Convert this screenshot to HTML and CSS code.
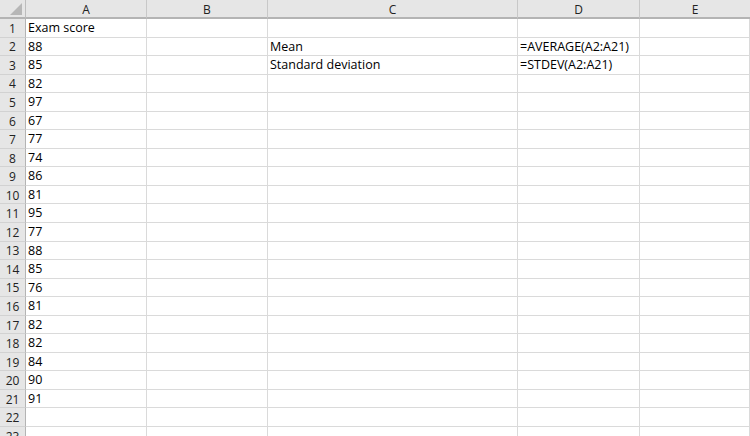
FILE: index.html
```html
<!DOCTYPE html>
<html lang="en">
<head>
  <meta charset="UTF-8" />
  <title>Exam scores</title>
  <link rel="stylesheet" href="styles.css">
</head>
<body>
  <div class="sheet">
    <div class="corner"><span class="tri"></span></div>
    <div class="col-head">A</div>
    <div class="col-head">B</div>
    <div class="col-head">C</div>
    <div class="col-head">D</div>
    <div class="col-head last">E</div>

    <div class="row-head">1</div><div class="cell">Exam score</div><div class="cell"></div><div class="cell"></div><div class="cell"></div><div class="cell"></div>
    <div class="row-head">2</div><div class="cell">88</div><div class="cell"></div><div class="cell">Mean</div><div class="cell">=AVERAGE(A2:A21)</div><div class="cell"></div>
    <div class="row-head">3</div><div class="cell">85</div><div class="cell"></div><div class="cell">Standard deviation</div><div class="cell">=STDEV(A2:A21)</div><div class="cell"></div>
    <div class="row-head">4</div><div class="cell">82</div><div class="cell"></div><div class="cell"></div><div class="cell"></div><div class="cell"></div>
    <div class="row-head">5</div><div class="cell">97</div><div class="cell"></div><div class="cell"></div><div class="cell"></div><div class="cell"></div>
    <div class="row-head">6</div><div class="cell">67</div><div class="cell"></div><div class="cell"></div><div class="cell"></div><div class="cell"></div>
    <div class="row-head">7</div><div class="cell">77</div><div class="cell"></div><div class="cell"></div><div class="cell"></div><div class="cell"></div>
    <div class="row-head">8</div><div class="cell">74</div><div class="cell"></div><div class="cell"></div><div class="cell"></div><div class="cell"></div>
    <div class="row-head">9</div><div class="cell">86</div><div class="cell"></div><div class="cell"></div><div class="cell"></div><div class="cell"></div>
    <div class="row-head">10</div><div class="cell">81</div><div class="cell"></div><div class="cell"></div><div class="cell"></div><div class="cell"></div>
    <div class="row-head">11</div><div class="cell">95</div><div class="cell"></div><div class="cell"></div><div class="cell"></div><div class="cell"></div>
    <div class="row-head">12</div><div class="cell">77</div><div class="cell"></div><div class="cell"></div><div class="cell"></div><div class="cell"></div>
    <div class="row-head">13</div><div class="cell">88</div><div class="cell"></div><div class="cell"></div><div class="cell"></div><div class="cell"></div>
    <div class="row-head">14</div><div class="cell">85</div><div class="cell"></div><div class="cell"></div><div class="cell"></div><div class="cell"></div>
    <div class="row-head">15</div><div class="cell">76</div><div class="cell"></div><div class="cell"></div><div class="cell"></div><div class="cell"></div>
    <div class="row-head">16</div><div class="cell">81</div><div class="cell"></div><div class="cell"></div><div class="cell"></div><div class="cell"></div>
    <div class="row-head">17</div><div class="cell">82</div><div class="cell"></div><div class="cell"></div><div class="cell"></div><div class="cell"></div>
    <div class="row-head">18</div><div class="cell">82</div><div class="cell"></div><div class="cell"></div><div class="cell"></div><div class="cell"></div>
    <div class="row-head">19</div><div class="cell">84</div><div class="cell"></div><div class="cell"></div><div class="cell"></div><div class="cell"></div>
    <div class="row-head">20</div><div class="cell">90</div><div class="cell"></div><div class="cell"></div><div class="cell"></div><div class="cell"></div>
    <div class="row-head">21</div><div class="cell">91</div><div class="cell"></div><div class="cell"></div><div class="cell"></div><div class="cell"></div>
    <div class="row-head">22</div><div class="cell"></div><div class="cell"></div><div class="cell"></div><div class="cell"></div><div class="cell"></div>
    <div class="row-head">23</div><div class="cell"></div><div class="cell"></div><div class="cell"></div><div class="cell"></div><div class="cell"></div>
  </div>
</body>
</html>
```

FILE: styles.css
```css
*, *::before, *::after { box-sizing: border-box; }
body {
  margin: 0;
  background: #fff;
  font-family: 'Open Sans', 'Liberation Sans', sans-serif;
  overflow: hidden;
}

.sheet {
  display: grid;
  grid-template-columns: 26px 121px 121px 250px 122px 110px;
  grid-template-rows: 19px;
  grid-auto-rows: 18.55px;
  height: 436px;
  overflow: hidden;
}

/* ヘッダー */
.corner, .col-head, .row-head {
  background: #e6e6e6;
  color: #222;
  font-size: 12px;
  display: flex; align-items: center; justify-content: center;
}
.corner {
  border-right: 1px solid #bdbdbd;
  border-bottom: 2px solid #b4b4b4;
  position: relative;
}
.corner .tri {
  position: absolute; right: 3px; bottom: 2px;
  width: 0; height: 0;
  border-left: 12px solid transparent;
  border-bottom: 12px solid #b7b7b7;
}
.col-head {
  border-right: 1px solid #c8c8c8;
  border-bottom: 2px solid #b4b4b4;
  padding-top: 1px;
}
.col-head.last { border-right: none; }
.row-head {
  border-right: 1px solid #b4b4b4;
  border-bottom: 1px solid #d2d2d2;
  padding-top: 1px;
}

/* セル */
.cell {
  border-right: 1px solid #dadada;
  border-bottom: 1px solid #dadada;
  font-size: 12.5px;
  color: #000;
  padding: 1px 0 0 2px;
  line-height: 16px;
  white-space: nowrap;
}
```
